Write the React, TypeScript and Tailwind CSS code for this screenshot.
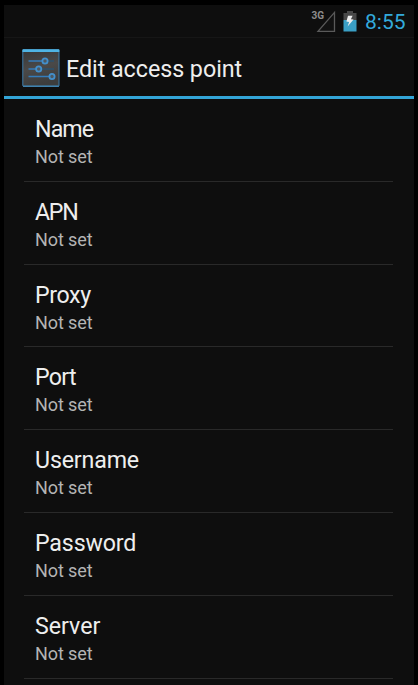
const fields: { label: string; tracking: string }[] = [
  { label: 'Name', tracking: 'tracking-[-0.9px]' },
  { label: 'APN', tracking: 'tracking-[-1.3px]' },
  { label: 'Proxy', tracking: 'tracking-[-0.4px]' },
  { label: 'Port', tracking: 'tracking-[-0.7px]' },
  { label: 'Username', tracking: 'tracking-[-0.15px]' },
  { label: 'Password', tracking: 'tracking-[-0.15px]' },
  { label: 'Server', tracking: 'tracking-normal' },
];

function SignalIcon() {
  return (
    <svg className="h-[23px] w-[26px] shrink-0" viewBox="0 0 26 23">
      <path d="M23.5 2.4V21.3H7Z" fill="#111111" stroke="#5a5a5a" strokeWidth="1.3" />
      <text x="0.6" y="9.4" fontSize="11.3" fontWeight="700" fill="#8c8c8c" textLength="12.6" lengthAdjust="spacingAndGlyphs">
        3G
      </text>
    </svg>
  );
}

function BatteryIcon() {
  return (
    <svg className="h-[21px] w-[14px] shrink-0" viewBox="0 0 14 21">
      <path d="M4 0H10V2H13.5V9H0.5V2H4Z" fill="#484848" />
      <rect x="0.5" y="9" width="13" height="11.5" fill="#3a9fc5" />
      <path d="M5 4.8L9.6 4.8L7.9 8.2L10.6 8.6L4.6 15.4L6.1 11L3.4 10.4Z" fill="#eeeeee" />
    </svg>
  );
}

function SettingsIcon() {
  return (
    <svg className="h-[38px] w-[38px] shrink-0" viewBox="0 0 38 38">
      <defs>
        <linearGradient id="tile" x1="0" y1="0" x2="0.25" y2="1">
          <stop offset="0" stopColor="#373737" />
          <stop offset="0.55" stopColor="#4a4948" />
          <stop offset="1" stopColor="#3d3d3d" />
        </linearGradient>
      </defs>
      <rect x="0.8" y="0.8" width="36.2" height="36.4" rx="0.6" fill="url(#tile)" stroke="#3c7cab" strokeWidth="1" />
      <rect x="0.4" y="0.2" width="37" height="2.8" rx="0.6" fill="#4fb4e4" />
      <path d="M1 37.2H37" stroke="#4693c5" strokeWidth="1" />
      <path d="M26 12H32M20 20H32" stroke="#2b526e" strokeWidth="1.3" />
      <path d="M6.5 12H20.5M6.5 20H14M6.5 27.5H27" stroke="#347cba" strokeWidth="1.7" />
      <g fill="#4c5963" stroke="#438fcb" strokeWidth="1.8">
        <circle cx="23" cy="12" r="2.6" />
        <circle cx="16.7" cy="20" r="2.6" />
        <circle cx="30" cy="27.5" r="2.6" />
      </g>
    </svg>
  );
}

export default function App() {
  return (
    <div className="h-[685px] w-[418px] overflow-hidden bg-black px-1 pt-[5px] font-[Roboto,'Liberation_Sans',sans-serif]">
      <div className="flex h-full flex-col bg-[#0e0e0e]">
        <div className="flex h-8 shrink-0 items-start pl-[307px] pt-[5px]">
          <SignalIcon />
          <span className="ml-1.5 mt-px flex">
            <BatteryIcon />
          </span>
          <span className="ml-2 mt-px whitespace-nowrap text-[21px] leading-[22px] text-[#33aadb]">8:55</span>
        </div>
        <header className="flex h-[62px] shrink-0 items-center border-b-[3px] border-t border-[#33a5d7] border-t-[#161616] pl-[18px] pt-0.5">
          <SettingsIcon />
          <h1 className="ml-[6px] whitespace-nowrap pt-0.5 text-[23.3px] leading-7 tracking-[-0.05px] text-[#eeeeee]">
            Edit access point
          </h1>
        </header>
        <ul className="shrink-0 pl-5 pr-[21px]">
          {fields.map(({ label, tracking }) => (
            <li key={label} className="h-[82.8px] border-b border-[#292929] pl-[11px] pt-4">
              <p className={`text-[23.2px] leading-7 text-[#eeeeee] ${tracking}`}>{label}</p>
              <p className="text-[18px] leading-7 tracking-[-0.1px] text-[#b4b4b4]">Not set</p>
            </li>
          ))}
        </ul>
      </div>
    </div>
  );
}
